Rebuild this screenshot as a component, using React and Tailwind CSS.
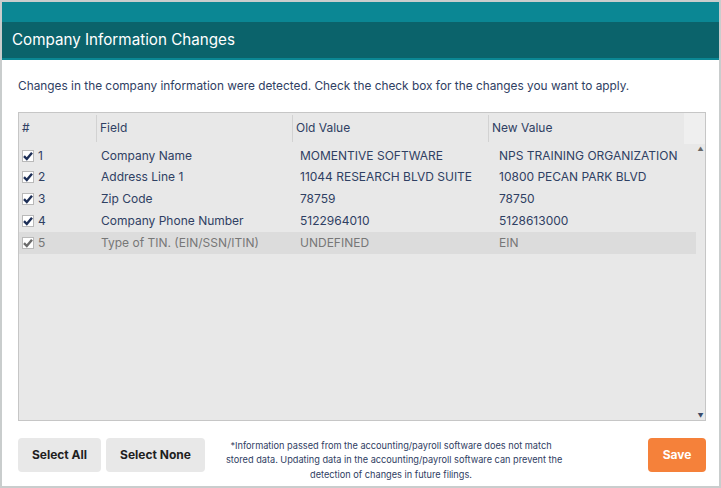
const rows = [
  { n: 1, field: "Company Name", oldV: "MOMENTIVE SOFTWARE", newV: "NPS TRAINING ORGANIZATION" },
  { n: 2, field: "Address Line 1", oldV: "11044 RESEARCH BLVD SUITE", newV: "10800 PECAN PARK BLVD" },
  { n: 3, field: "Zip Code", oldV: "78759", newV: "78750" },
  { n: 4, field: "Company Phone Number", oldV: "5122964010", newV: "5128613000" },
  { n: 5, field: "Type of TIN. (EIN/SSN/ITIN)", oldV: "UNDEFINED", newV: "EIN", muted: true },
];

const Check = ({ muted }) => (
  <span className="w-[12px] h-[12px] bg-white border border-[#b9b9b9] flex items-center justify-center">
    <svg width="10" height="10" viewBox="0 0 10 10">
      <path d="M1 5.2 L3.8 8 L9 1.8" fill="none" stroke={muted ? "#6b6b6b" : "#1d2f57"} strokeWidth="2.4" />
    </svg>
  </span>
);

export default function App() {
  return (
    <div className="w-[721px] h-[488px] border-2 border-[#c9cdcd] bg-white flex flex-col text-[#2f4063]" style={{ fontFamily: "Inter, 'Noto Sans', sans-serif" }}>
      <div className="h-[20px] shrink-0 bg-[#0b8794]"></div>
      <div className="h-[38px] shrink-0 bg-[#0b636b] border-b-2 border-[#0b8794] flex items-center px-[10px]">
        <span className="text-white text-[15.2px]">Company Information Changes</span>
      </div>
      <p className="text-[11.85px] mt-[18px] ml-[16px] shrink-0">Changes in the company information were detected. Check the check box for the changes you want to apply.</p>
      <div className="ml-[16px] mr-[13px] mt-[16px] h-[309px] shrink-0 border border-[#c6c6c6] bg-[#e8e8e8] flex flex-col text-[12px]">
        <div className="h-[31px] flex items-center">
          <div className="w-[78px] h-[27px] flex items-center pl-[3px] border-r border-[#d2d2d2]">#</div>
          <div className="w-[196px] h-[27px] flex items-center pl-[3px] border-r border-[#d2d2d2]">Field</div>
          <div className="w-[196px] h-[27px] flex items-center pl-[3px] border-r border-[#d2d2d2]">Old Value</div>
          <div className="w-[195px] h-[27px] flex items-center pl-[3px]">New Value</div>
          <div className="flex-1 h-full bg-[#efefef]"></div>
        </div>
        <div className="flex flex-1 pt-[1px]">
          <div className="flex-1 flex flex-col">
            {rows.map((r) => (
              <div key={r.n} className={`h-[21.8px] flex items-center ${r.muted ? "bg-[#dcdcdc] text-[#777]" : ""}`}>
                <div className="w-[78px] flex items-center gap-[4px] pl-[3px]">
                  <Check muted={r.muted} />
                  <span>{r.n}</span>
                </div>
                <div className="w-[196px] pl-[4px]">{r.field}</div>
                <div className="w-[196px] pl-[7px]">{r.oldV}</div>
                <div className="pl-[10px]">{r.newV}</div>
              </div>
            ))}
          </div>
          <div className="w-[9px] flex flex-col justify-between items-center py-[1px]">
            <span className="text-[6px] leading-none text-[#666]">▲</span>
            <span className="text-[6px] leading-none text-[#3a4a6a]">▼</span>
          </div>
        </div>
      </div>
      <div className="flex items-start ml-[16px] mr-[13px] mt-[15px] shrink-0">
        <button className="mt-[2px] w-[83px] h-[34px] rounded bg-[#e8e8e8] text-[#1f1f1f] font-bold text-[12px]">Select All</button>
        <button className="mt-[2px] w-[99px] h-[34px] ml-[5px] rounded bg-[#e8e8e8] text-[#1f1f1f] font-bold text-[12px]">Select None</button>
        <p className="mt-[3px] w-[330px] ml-[21px] text-center text-[9.2px] leading-[14.5px] whitespace-nowrap">
          *Information passed from the accounting/payroll software does not match<br />
          stored data. Updating data in the accounting/payroll software can prevent the<br />
          detection of changes in future filings.
        </p>
        <button className="mt-[2px] ml-auto w-[58px] h-[34px] rounded bg-[#f5813a] text-white font-bold text-[12px]">Save</button>
      </div>
    </div>
  );
}
